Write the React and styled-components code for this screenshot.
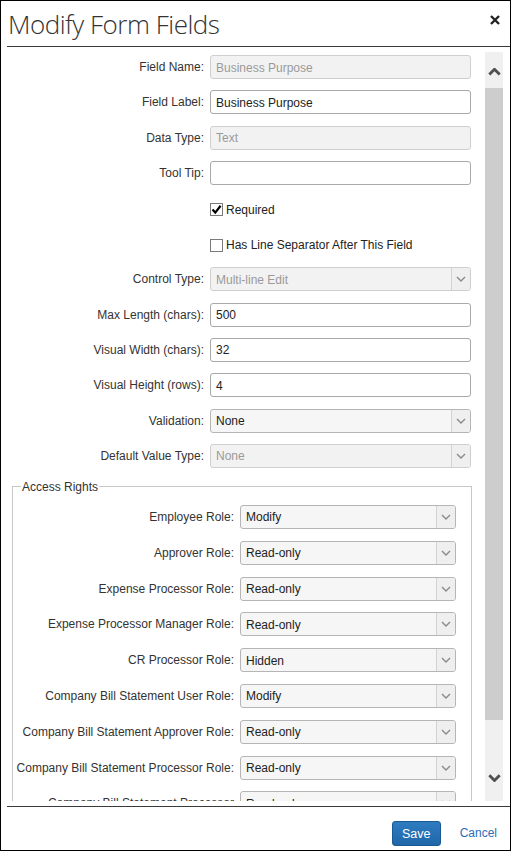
import React from "react";
import styled, { createGlobalStyle } from "styled-components";

const GlobalStyle = createGlobalStyle`
  html, body {
    margin: 0;
    padding: 0;
    background: #fff;
  }
  * {
    box-sizing: border-box;
  }
`;

const fields = [
  { label: "Field Name:", kind: "input", value: "Business Purpose", disabled: true },
  { label: "Field Label:", kind: "input", value: "Business Purpose" },
  { label: "Data Type:", kind: "input", value: "Text", disabled: true },
  { label: "Tool Tip:", kind: "input", value: "" },
  { label: "", kind: "check", value: "Required", checked: true },
  { label: "", kind: "check", value: "Has Line Separator After This Field" },
  { label: "Control Type:", kind: "select", value: "Multi-line Edit", disabled: true },
  { label: "Max Length (chars):", kind: "input", value: "500" },
  { label: "Visual Width (chars):", kind: "input", value: "32" },
  { label: "Visual Height (rows):", kind: "input", value: "4" },
  { label: "Validation:", kind: "select", value: "None" },
  { label: "Default Value Type:", kind: "select", value: "None", disabled: true },
];

const roles = [
  ["Employee Role:", "Modify"],
  ["Approver Role:", "Read-only"],
  ["Expense Processor Role:", "Read-only"],
  ["Expense Processor Manager Role:", "Read-only"],
  ["CR Processor Role:", "Hidden"],
  ["Company Bill Statement User Role:", "Modify"],
  ["Company Bill Statement Approver Role:", "Read-only"],
  ["Company Bill Statement Processor Role:", "Read-only"],
  ["Company Bill Statement Processor Manager Role:", "Read-only"],
];

function Chevron({ up, size = 10, color = "#8a8a8a", width = 1.4 }) {
  return (
    <svg width={size} height={size * 0.6} viewBox="0 0 10 6">
      <polyline
        points={up ? "1,5 5,1 9,5" : "1,1 5,5 9,1"}
        fill="none"
        stroke={color}
        strokeWidth={width}
      />
    </svg>
  );
}

function Select({ value, disabled }) {
  return (
    <SelectBox $disabled={disabled}>
      <SelectValue>{value}</SelectValue>
      <SelectArrow>
        <Chevron />
      </SelectArrow>
    </SelectBox>
  );
}

function CheckField({ checked, text }) {
  return (
    <CheckLabel>
      <CheckBox>
        {checked && (
          <svg width="11" height="11" viewBox="0 0 11 11">
            <path d="M1.5 5.5 L4.3 8.6 L9.6 1.8" fill="none" stroke="#000" strokeWidth="2.2" />
          </svg>
        )}
      </CheckBox>
      {text}
    </CheckLabel>
  );
}

export default function App() {
  return (
    <>
      <GlobalStyle />
      <Dialog>
        <Header>
          <Title>Modify Form Fields</Title>
          <Close aria-label="close">
            <svg width="10" height="10" viewBox="0 0 10 10">
              <path d="M1 1 L9 9 M9 1 L1 9" stroke="#222" strokeWidth="2.4" />
            </svg>
          </Close>
        </Header>
        <Body>
          <Content>
            <Rows>
              {fields.map((f, i) => (
                <FormRow key={i}>
                  <Label>{f.label}</Label>
                  {f.kind === "input" && (
                    <TextInput $disabled={f.disabled}>{f.value}</TextInput>
                  )}
                  {f.kind === "select" && <Select value={f.value} disabled={f.disabled} />}
                  {f.kind === "check" && <CheckField checked={f.checked} text={f.value} />}
                </FormRow>
              ))}
            </Rows>
            <Fieldset>
              <Legend>Access Rights</Legend>
              <Rows $gap={11.8}>
                {roles.map(([label, value]) => (
                  <RoleRow key={label}>
                    <Label>{label}</Label>
                    <Select value={value} />
                  </RoleRow>
                ))}
              </Rows>
            </Fieldset>
          </Content>
          <Scrollbar>
            <ScrollButton>
              <Chevron up size={13} color="#505050" width={2.2} />
            </ScrollButton>
            <Thumb />
            <ScrollTrack />
            <ScrollButton $bottom>
              <Chevron size={13} color="#505050" width={2.2} />
            </ScrollButton>
          </Scrollbar>
        </Body>
        <Footer>
          <SaveButton>Save</SaveButton>
          <CancelLink>Cancel</CancelLink>
        </Footer>
      </Dialog>
    </>
  );
}

const Dialog = styled.div`
  width: 511px;
  height: 851px;
  border: 1px solid #000;
  display: flex;
  flex-direction: column;
  background: #fff;
  font-family: "Liberation Sans", Arial, sans-serif;
  font-size: 12px;
  color: #333;
  overflow: hidden;
`;

const Header = styled.div`
  height: 46px;
  margin-left: 6px;
  border-bottom: 1px solid #3a3a3a;
  display: flex;
  align-items: flex-start;
  justify-content: space-between;
  flex-shrink: 0;
`;

const Title = styled.h1`
  margin: 5px 0 0 1px;
  font-family: "Open Sans", sans-serif;
  font-weight: 300;
  font-size: 26px;
  line-height: 36px;
  color: #333;
  letter-spacing: -0.5px;
`;

const Close = styled.div`
  width: 22px;
  height: 22px;
  margin: 8px 4px 0 0;
  display: flex;
  align-items: center;
  justify-content: center;
`;

const Body = styled.div`
  flex: 1;
  display: flex;
  min-height: 0;
  padding-bottom: 5px;
`;

const Content = styled.div`
  flex: 1;
  overflow: hidden;
  padding-top: 8px;
`;

const Rows = styled.div`
  display: flex;
  flex-direction: column;
  gap: ${(p) => p.$gap || 11.36}px;
`;

const FormRow = styled.div`
  display: grid;
  grid-template-columns: 203px 261px;
  column-gap: 6px;
  align-items: start;
  min-height: 24px;
`;

const RoleRow = styled(FormRow)`
  grid-template-columns: 221px 216px;
  gap: 6px;
`;

const Label = styled.div`
  text-align: right;
  padding-top: 5px;
  line-height: 14px;
  color: #333;
`;

const TextInput = styled.div`
  height: 24px;
  border: 1px solid ${(p) => (p.$disabled ? "#cfcfcf" : "#a9a9a9")};
  border-radius: 3px;
  background: ${(p) => (p.$disabled ? "#f2f2f2" : "#fff")};
  color: ${(p) => (p.$disabled ? "#9a9a9a" : "#222")};
  padding: 1px 5px 0;
  display: flex;
  align-items: center;
  font-size: 12px;
`;

const SelectBox = styled.div`
  height: 24px;
  display: flex;
  border: 1px solid ${(p) => (p.$disabled ? "#cfcfcf" : "#b5b5b5")};
  border-radius: 3px;
  background: ${(p) => (p.$disabled ? "#f2f2f2" : "#f6f6f6")};
  color: ${(p) => (p.$disabled ? "#9a9a9a" : "#222")};
  overflow: hidden;
`;

const SelectValue = styled.div`
  flex: 1;
  padding: 1px 5px 0;
  display: flex;
  align-items: center;
`;

const SelectArrow = styled.div`
  width: 19px;
  border-left: 1px solid #d2d2d2;
  background: #efefef;
  display: flex;
  align-items: center;
  justify-content: center;
`;

const CheckLabel = styled.label`
  display: flex;
  align-items: center;
  gap: 3px;
  height: 24px;
  padding-top: 3px;
  color: #222;
`;

const CheckBox = styled.span`
  width: 13px;
  height: 13px;
  border: 1px solid #7a7a7a;
  background: #fff;
  display: flex;
  align-items: center;
  justify-content: center;
`;

const Fieldset = styled.fieldset`
  margin: 12px 0 0 11px;
  width: 460px;
  border: 1px solid #c8c8c8;
  padding: 11px 14px 20px 0;
`;

const Legend = styled.legend`
  margin-left: 8px;
  padding: 0 1px;
  font-size: 12px;
  color: #333;
`;

const Scrollbar = styled.div`
  width: 18px;
  margin: 5px 7px 0 5px;
  display: flex;
  flex-direction: column;
  background: #f0f0f0;
`;

const ScrollButton = styled.div`
  height: 36px;
  display: flex;
  align-items: center;
  justify-content: center;
  padding: ${(p) => (p.$bottom ? "0 0 10px" : "4px 0 0")};
`;

const Thumb = styled.div`
  height: 632px;
  background: #cdcdcd;
`;

const ScrollTrack = styled.div`
  flex: 1;
`;

const Footer = styled.div`
  height: 44px;
  margin-left: 6px;
  border-top: 1px solid #3a3a3a;
  display: flex;
  align-items: flex-start;
  justify-content: flex-end;
  padding: 14px 13px 0 0;
  gap: 19px;
  flex-shrink: 0;
`;

const SaveButton = styled.button`
  width: 49px;
  height: 25px;
  border: 1px solid #1a5a93;
  border-radius: 3px;
  background: linear-gradient(#2e7cc0, #1f67a9);
  color: #fff;
  font-family: "Liberation Sans", Arial, sans-serif;
  font-size: 12.5px;
  padding: 0;
`;

const CancelLink = styled.a`
  color: #2a6db5;
  font-size: 12px;
  line-height: 25px;
  cursor: pointer;
`;
